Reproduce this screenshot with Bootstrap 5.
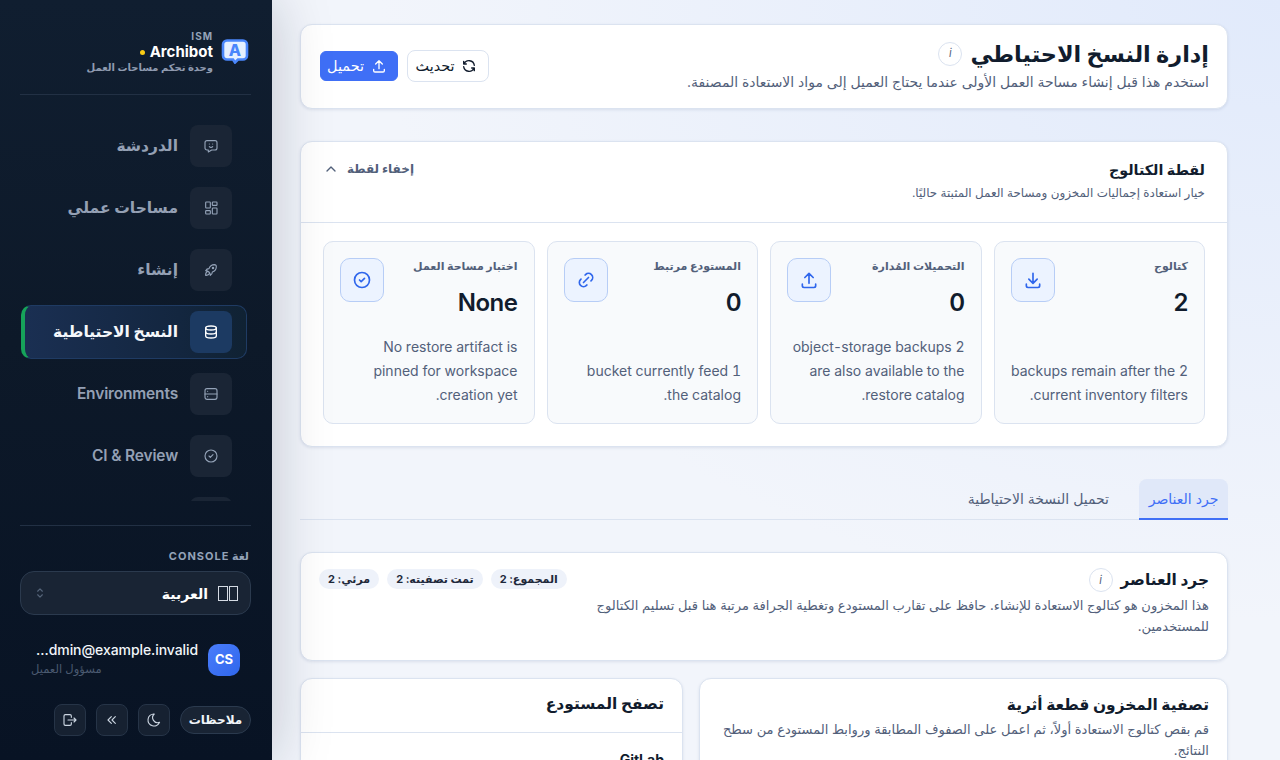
<!DOCTYPE html>
<html lang="ar" dir="rtl">
<head>
<meta charset="utf-8">
<title>إدارة النسخ الاحتياطي</title>
<link href="https://cdn.jsdelivr.net/npm/bootstrap@5.3.0/dist/css/bootstrap.min.css" rel="stylesheet">
<style>
html,body{height:760px;overflow:hidden;}
body{font-family:Inter,"DejaVu Sans",sans-serif;font-size:14px;color:#52607a;background:#f2f5fb;}
svg.ico{fill:none;stroke:currentColor;stroke-width:2;stroke-linecap:round;stroke-linejoin:round;display:block;}
svg.thin{stroke-width:1.7;}
.shell{height:760px;flex-direction:row-reverse;}
.side{width:272px;flex:none;height:760px;background:linear-gradient(180deg,#101e30 0%,#0d1929 45%,#081324 100%);box-shadow:0 0 56px rgba(15,23,42,.22);z-index:2;padding:30px 21px 24px 20px;}
.brand{padding:0 2px 0 2px;border-bottom:1px solid #223044;height:65px;flex:none;}
.brand-logo{margin-top:8px;flex:none;}
.brand-tag{font-size:10px;font-weight:700;letter-spacing:1px;color:#94a3b8;line-height:13px;}
.brand-name{font-size:15px;font-weight:700;color:#fff;line-height:18px;gap:5px;}
.brand-dot{width:5px;height:5px;background:#facc15;border-radius:50%;}
.brand-sub{font-size:10px;font-weight:700;color:#8f9bb0;line-height:13px;}
.navbox{height:406px;flex:none;overflow:hidden;padding:24px 4px 0 1px;margin-bottom:24px;gap:8px;}
.navrow{height:54px;flex:none;padding:0 14px 0 0;gap:12px;font-size:15.5px;font-weight:700;color:#94a0b4;border:1px solid transparent;border-radius:10px;}
.navrow.latin{font-weight:600;letter-spacing:-.01em;}
.navico{width:42px;height:42px;background:#1a2535;border-radius:8px;color:#94a3b8;flex:none;}
.navrow.on{background:linear-gradient(90deg,#1a2f52 0%,#13263f 70%,#102233 100%);border-color:#1f3b63;border-left:4px solid #16a35a;color:#f4f7fb;}
.navrow.on .navico{background:#1c3a62;color:#fff;}
.foot{border-top:1px solid #223044;flex:none;}
.lang-label{font-size:11px;font-weight:700;letter-spacing:1px;color:#94a3b8;padding:0 2px;margin-top:23px;line-height:14px;}
.lang-sel{height:44px;margin-top:8px;background:#192434;border:1px solid #2b3a4e;border-radius:14px;padding:0 12px;color:#fff;font-weight:700;font-size:14px;gap:10px;}
.tofus{gap:1px;}
.tofu{width:9.5px;height:15px;border:1px solid #d5dbe4;display:block;}
.user{margin-top:26px;padding:0 11px;gap:10px;}
.avatar{width:32px;height:32px;border-radius:10px;background:linear-gradient(135deg,#4a7dfb,#2f66ec);color:#fff;font-weight:700;font-size:13px;flex:none;}
.user-name{font-size:14px;font-weight:500;letter-spacing:-.08px;color:#f1f5f9;line-height:18px;direction:ltr;text-align:right;}
.user-role{font-size:11.5px;color:#4b5a70;line-height:20px;text-align:left;}
.tools{margin-top:25px;gap:10px;}
.pill-note{height:28px;border-radius:14px;background:#192434;border:1px solid #2b3a4e;color:#f1f5f9;font-weight:700;font-size:12px;padding:0 8px;width:71px;}
.tool{width:32px;height:32px;background:#162131;border:1px solid #263447;border-radius:8px;color:#cbd5e1;}
.main{flex:1 1 auto;min-width:0;height:760px;overflow:hidden;padding:24px 52px 0 28px;background:radial-gradient(ellipse 900px 620px at 100% 0,#e1eafb 0%,rgba(225,234,251,0) 100%),#f2f5fb;}
.panel{background:#fff;border:1px solid #dbe3f0;border-radius:12px;box-shadow:0 1px 3px rgba(60,80,130,.12);}
.hdr{height:85px;padding:0 18px 2px 19px;margin-bottom:32px;}
.h-row{margin-bottom:2px;}
.h-title{font-size:22.4px;font-weight:700;color:#111c2d;line-height:30px;margin:0;}
.infob{width:24px;height:24px;border:1px solid #dbe3f0;border-radius:50%;background:#fff;font-size:11px;font-style:italic;color:#52607a;flex:none;}
.h-sub{font-size:13.95px;line-height:22px;}
.btn-ghost{height:32px;width:82px;background:#fff;border:1px solid #dbe3f0;border-radius:8px;color:#111c2d;font-size:14.4px;gap:6px;padding:0 4px 0 0;}
.btn-prime{height:30px;width:78px;background:#3f6ff6;border:1px solid #3f6ff6;border-radius:6px;color:#fff;font-size:14.4px;gap:7px;padding:0 4px 0 0;}
.hdr-actions{gap:9px;}
.snap{height:306px;margin-bottom:32px;}
.snap-head{height:81px;padding:0 22px 3px;border-bottom:1px solid #dbe3f0;}
.snap-title{font-size:14.3px;font-weight:700;color:#111c2d;line-height:22px;margin:0;}
.snap-sub{font-size:11.95px;line-height:18px;margin-top:3px;}
.toggle{font-size:12px;font-weight:700;color:#52607a;gap:8px;margin-top:-24px;}
.stats{display:grid;grid-template-columns:repeat(4,1fr);gap:12px;padding:18px 22px 0 22px;}
.stat{height:183px;background:#f8fafc;border:1px solid #dbe3f0;border-radius:10px;padding:16px;}
.stat-ico{width:44px;height:44px;background:#ecf3ff;border:1px solid #b7cdf6;border-radius:10px;color:#2f66ec;flex:none;}
.stat-label{font-size:11px;font-weight:700;line-height:16px;color:#52607a;}
.stat-val{font-size:24px;font-weight:600;letter-spacing:-.02em;color:#111c2d;line-height:32px;margin-top:13px;}
.stat-desc{font-size:14px;line-height:24px;margin-top:auto;font-variant-numeric:tabular-nums;}
.tabsline{height:41px;border-bottom:1px solid #dbe3f0;margin-bottom:32px;gap:20px;}
.tabx{height:41px;padding:0 10px 2px;font-size:14px;color:#52607a;margin-bottom:-1px;}
.tabx.on{background:#e0e8f9;color:#3f6ff6;border-bottom:2px solid #3f6ff6;border-radius:8px 8px 0 0;width:89px;padding:0 0 1px;}
.inv{height:109px;padding:15px 18px 0 18px;margin-bottom:17px;}
.p-title{font-size:15.4px;font-weight:700;color:#111c2d;line-height:22px;margin:0;}
.p-text{font-size:13.05px;line-height:20.8px;max-width:625px;margin-top:3px;}
.p-wide{max-width:none;}
.chipx{height:20px;border-radius:10px;background:#eef2fa;color:#1e293b;font-weight:700;font-size:11px;padding:0 9px;margin-top:1px;}
.cols{display:grid;grid-template-columns:529px 383px;gap:16px;}
.cardx{height:200px;}
.c-pad{padding:15px 18px;}
.c-head{height:54px;padding:0 18px 3px;border-bottom:1px solid #dbe3f0;}
.c-name{font-size:14px;font-weight:700;color:#111c2d;padding:18px 18px 0;line-height:18px;}
</style>
</head>
<body>
<div class="d-flex shell">
  <aside class="side d-flex flex-column">
    <div class="brand d-flex align-items-start justify-content-start gap-2">
      <svg class="brand-logo" width="28" height="26" viewBox="0 0 28 26"><path d="M6 2.500h16a4 4 0 0 1 4 4v11a4 4 0 0 1-4 4h-5l-3 3-2-3H6a4 4 0 0 1-4-4v-11a4 4 0 0 1 4-4z" fill="#e6f0ff" stroke="#4a86fb" stroke-width="2.600"/><text x="14" y="18" text-anchor="middle" font-family="Inter" font-weight="800" font-size="16" fill="#4a86fb">A</text></svg>
      <div>
        <div class="brand-tag">ISM</div>
        <div class="brand-name d-flex align-items-center">Archibot <span class="brand-dot"></span></div>
        <div class="brand-sub">وحدة تحكم مساحات العمل</div>
      </div>
    </div>
    <nav class="navbox d-flex flex-column">
      <div class="navrow d-flex align-items-center"><span class="navico d-flex align-items-center justify-content-center"><svg class="ico thin" width="16" height="16" viewBox="0 0 24 24"><path d="M18 4a3 3 0 0 1 3 3v8a3 3 0 0 1-3 3h-5l-5 3v-3H6a3 3 0 0 1-3-3V7a3 3 0 0 1 3-3z"/><path d="M9.500 9h.01M14.500 9h.01M9.500 13a3.500 3.500 0 0 0 5 0"/></svg></span>الدردشة</div>
      <div class="navrow d-flex align-items-center"><span class="navico d-flex align-items-center justify-content-center"><svg class="ico thin" width="16" height="16" viewBox="0 0 24 24"><rect x="4" y="3" width="7" height="9" rx="1"/><rect x="14" y="3" width="7" height="5" rx="1"/><rect x="14" y="12" width="7" height="9" rx="1"/><rect x="4" y="16" width="7" height="5" rx="1"/></svg></span>مساحات عملي</div>
      <div class="navrow d-flex align-items-center"><span class="navico d-flex align-items-center justify-content-center"><svg class="ico thin" width="16" height="16" viewBox="0 0 24 24"><path d="M4 13a8 8 0 0 1 7 7 6 6 0 0 0 3-5 9 9 0 0 0 6-8 3 3 0 0 0-3-3 9 9 0 0 0-8 6 6 6 0 0 0-5 3"/><path d="M7 14a6 6 0 0 0-3 6 6 6 0 0 0 6-3"/><circle cx="15" cy="9" r="1"/></svg></span>إنشاء</div>
      <div class="navrow on d-flex align-items-center"><span class="navico d-flex align-items-center justify-content-center"><svg class="ico" width="16" height="16" viewBox="0 0 24 24"><ellipse cx="12" cy="6" rx="8" ry="3"/><path d="M4 6v12c0 1.700 3.600 3 8 3s8-1.300 8-3V6"/><path d="M4 12c0 1.700 3.600 3 8 3s8-1.300 8-3"/></svg></span>النسخ الاحتياطية</div>
      <div class="navrow latin d-flex align-items-center"><span class="navico d-flex align-items-center justify-content-center"><svg class="ico thin" width="16" height="16" viewBox="0 0 24 24"><rect x="3" y="4" width="18" height="16" rx="3"/><path d="M3 12h18M7 8h.01M7 16h.01"/></svg></span>Environments</div>
      <div class="navrow latin d-flex align-items-center"><span class="navico d-flex align-items-center justify-content-center"><svg class="ico thin" width="16" height="16" viewBox="0 0 24 24"><circle cx="12" cy="12" r="9"/><path d="M9 12l2 2 4-4"/></svg></span>CI &amp; Review</div>
      <div class="navrow d-flex align-items-center"><span class="navico"></span></div>
    </nav>
    <div class="foot">
      <div class="lang-label">لغة CONSOLE</div>
      <div class="lang-sel d-flex align-items-center">
        <span class="d-flex tofus"><span class="tofu"></span><span class="tofu"></span></span>
        <span class="flex-grow-1">العربية</span>
        <svg class="ico" width="14" height="14" viewBox="0 0 24 24"><path stroke="#56657a" d="M8 9l4-4 4 4M16 15l-4 4-4-4"/></svg>
      </div>
      <div class="user d-flex align-items-center">
        <span class="avatar d-flex align-items-center justify-content-center">CS</span>
        <div class="flex-grow-1">
          <div class="user-name">…dmin@example.invalid</div>
          <div class="user-role">مسؤول العميل</div>
        </div>
      </div>
      <div class="tools d-flex align-items-center">
        <span class="pill-note d-flex align-items-center justify-content-center">ملاحظات</span>
        <span class="tool d-flex align-items-center justify-content-center"><svg class="ico thin" width="16" height="16" viewBox="0 0 24 24"><path d="M12 3h.393a7.500 7.500 0 0 0 7.920 12.446A9 9 0 1 1 12 2.992z"/></svg></span>
        <span class="tool d-flex align-items-center justify-content-center"><svg class="ico thin" width="16" height="16" viewBox="0 0 24 24"><path d="M11 7l-5 5 5 5M17 7l-5 5 5 5"/></svg></span>
        <span class="tool d-flex align-items-center justify-content-center"><svg class="ico thin" width="16" height="16" viewBox="0 0 24 24"><path d="M14 8V6a2 2 0 0 0-2-2H5a2 2 0 0 0-2 2v12a2 2 0 0 0 2 2h7a2 2 0 0 0 2-2v-2"/><path d="M9 12h12l-3-3M18 15l3-3"/></svg></span>
      </div>
    </div>
  </aside>

  <main class="main">
    <section class="panel hdr d-flex align-items-center justify-content-between">
      <div>
        <div class="d-flex align-items-center gap-2 h-row"><h1 class="h-title">إدارة النسخ الاحتياطي</h1><span class="infob d-flex align-items-center justify-content-center">i</span></div>
        <div class="h-sub">استخدم هذا قبل إنشاء مساحة العمل الأولى عندما يحتاج العميل إلى مواد الاستعادة المصنفة.</div>
      </div>
      <div class="d-flex align-items-center hdr-actions">
        <button class="btn btn-ghost d-flex align-items-center justify-content-center"><svg class="ico" width="16" height="16" viewBox="0 0 24 24"><path d="M20 11a8.100 8.100 0 0 0-15.500-2m-.5-4v4h4"/><path d="M4 13a8.100 8.100 0 0 0 15.500 2m.5 4v-4h-4"/></svg>تحديث</button>
        <button class="btn btn-prime d-flex align-items-center justify-content-center"><svg class="ico" width="16" height="16" viewBox="0 0 24 24"><path d="M4 17v2a2 2 0 0 0 2 2h12a2 2 0 0 0 2-2v-2M7 9l5-5 5 5M12 4v12"/></svg>تحميل</button>
      </div>
    </section>

    <section class="panel snap">
      <div class="snap-head d-flex align-items-center justify-content-between">
        <div>
          <h2 class="snap-title">لقطة الكتالوج</h2>
          <div class="snap-sub">خيار استعادة إجماليات المخزون ومساحة العمل المثبتة حاليًا.</div>
        </div>
        <div class="toggle d-flex align-items-center">إخفاء لقطة<svg class="ico" width="16" height="16" viewBox="0 0 24 24"><path d="M6 15l6-6 6 6"/></svg></div>
      </div>
      <div class="stats">
        <div class="stat d-flex flex-column">
          <div class="d-flex justify-content-between"><div><div class="stat-label">كتالوج</div><div class="stat-val">2</div></div><span class="stat-ico d-flex align-items-center justify-content-center"><svg class="ico" width="20" height="20" viewBox="0 0 24 24"><path d="M4 17v2a2 2 0 0 0 2 2h12a2 2 0 0 0 2-2v-2M7 11l5 5 5-5M12 4v12"/></svg></span></div>
          <div class="stat-desc">2 backups remain after the current inventory filters.</div>
        </div>
        <div class="stat d-flex flex-column">
          <div class="d-flex justify-content-between"><div><div class="stat-label">التحميلات المُدارة</div><div class="stat-val">0</div></div><span class="stat-ico d-flex align-items-center justify-content-center"><svg class="ico" width="20" height="20" viewBox="0 0 24 24"><path d="M4 17v2a2 2 0 0 0 2 2h12a2 2 0 0 0 2-2v-2M7 9l5-5 5 5M12 4v12"/></svg></span></div>
          <div class="stat-desc">2 object&#8202;‑&#8202;storage backups are also available to the restore catalog.</div>
        </div>
        <div class="stat d-flex flex-column">
          <div class="d-flex justify-content-between"><div><div class="stat-label">المستودع مرتبط</div><div class="stat-val">0</div></div><span class="stat-ico d-flex align-items-center justify-content-center"><svg class="ico" width="20" height="20" viewBox="0 0 24 24"><path d="M9 15l6-6M11 6l.463-.536a5 5 0 0 1 7.071 7.072l-.534.464M13 18l-.397.534a5.068 5.068 0 0 1-7.127 0 4.972 4.972 0 0 1 0-7.071l.524-.463"/></svg></span></div>
          <div class="stat-desc">1 bucket currently feed the catalog.</div>
        </div>
        <div class="stat d-flex flex-column">
          <div class="d-flex justify-content-between"><div><div class="stat-label">اختبار مساحة العمل</div><div class="stat-val">None</div></div><span class="stat-ico d-flex align-items-center justify-content-center"><svg class="ico" width="20" height="20" viewBox="0 0 24 24"><circle cx="12" cy="12" r="9"/><path d="M9 12l2 2 4-4"/></svg></span></div>
          <div class="stat-desc">No restore artifact is pinned for workspace creation yet.</div>
        </div>
      </div>
    </section>

    <div class="tabsline d-flex">
      <div class="tabx on d-flex align-items-center justify-content-center">جرد العناصر</div>
      <div class="tabx d-flex align-items-center">تحميل النسخة الاحتياطية</div>
    </div>

    <section class="panel inv">
      <div class="d-flex justify-content-between align-items-start">
        <div class="d-flex align-items-center gap-2"><h2 class="p-title">جرد العناصر</h2><span class="infob d-flex align-items-center justify-content-center">i</span></div>
        <div class="d-flex gap-2">
          <span class="chipx d-flex align-items-center">المجموع: 2</span>
          <span class="chipx d-flex align-items-center">تمت تصفيته: 2</span>
          <span class="chipx d-flex align-items-center">مرئي: 2</span>
        </div>
      </div>
      <div class="p-text">هذا المخزون هو كتالوج الاستعادة للإنشاء. حافظ على تقارب المستودع وتغطية الجرافة مرتبة هنا قبل تسليم الكتالوج للمستخدمين.</div>
    </section>

    <div class="cols">
      <section class="panel cardx c-pad">
        <h2 class="p-title">تصفية المخزون قطعة أثرية</h2>
        <div class="p-text p-wide">قم بقص كتالوج الاستعادة أولاً، ثم اعمل على الصفوف المطابقة وروابط المستودع من سطح النتائج.</div>
      </section>
      <section class="panel cardx">
        <div class="c-head d-flex align-items-center"><h2 class="p-title">تصفح المستودع</h2></div>
        <div class="c-name">GitLab</div>
      </section>
    </div>
  </main>
</div>
<script src="https://cdn.jsdelivr.net/npm/bootstrap@5.3.0/dist/js/bootstrap.bundle.min.js"></script>
</body>
</html>
